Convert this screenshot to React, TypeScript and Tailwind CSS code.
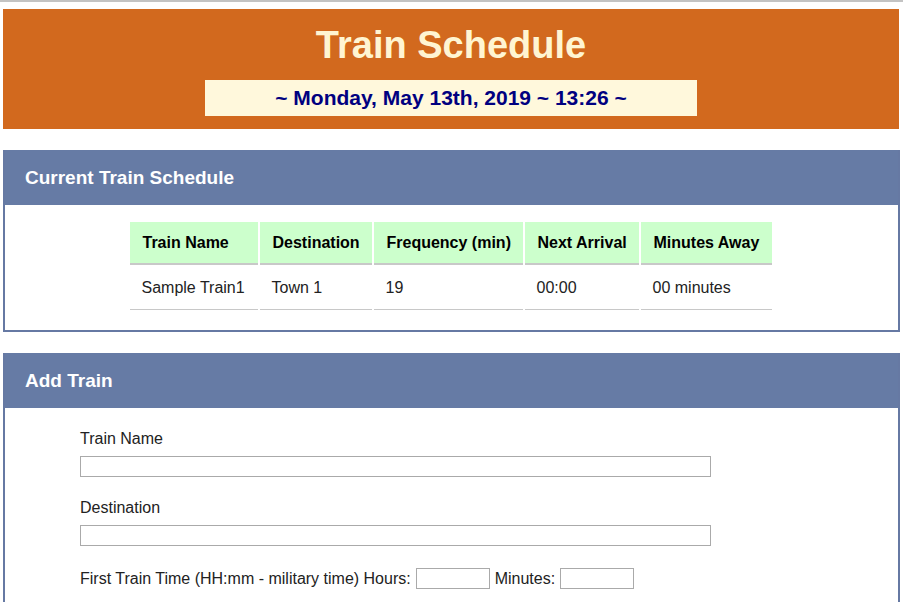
import React from "react";

const trains = [
  { name: "Sample Train1", destination: "Town 1", frequency: "19", next: "00:00", away: "00 minutes" },
];

const columns = [
  { label: "Train Name", w: "w-[128px]" },
  { label: "Destination", w: "w-[112px]" },
  { label: "Frequency (min)", w: "w-[149px]" },
  { label: "Next Arrival", w: "w-[114px]" },
  { label: "Minutes Away", w: "w-[131px]" },
];

function Panel({ title, children }: { title: string; children: React.ReactNode }) {
  return (
    <div className="border-2 border-t-0 border-[#6679a3] bg-white">
      <div className="h-[55px] bg-[#667ba5] pl-[20px] pt-[2px] flex items-center">
        <h3 className="text-[19px] font-bold text-white">{title}</h3>
      </div>
      {children}
    </div>
  );
}

export default function App() {
  return (
    <div className="min-h-screen bg-white border-t-2 border-[#c3c3c3] px-[3px] pt-[7px] font-['Liberation_Sans',Arial,sans-serif] text-[16px] text-black">
      {/* Header */}
      <div className="bg-[#d2691e] h-[120px] flex flex-col items-center mr-px">
        <h1 className="mt-[11px] h-[50px] leading-[50px] text-[38px] font-bold text-[#fff5d2]">Train Schedule</h1>
        <div className="mt-[10px] w-[492px] h-[36px] bg-[#fff8dc] flex items-center justify-center">
          <span className="text-[21px] font-bold text-[#000080]">~ Monday, May 13th, 2019 ~ 13:26 ~</span>
        </div>
      </div>

      <div className="mt-[21px]">
        <Panel title="Current Train Schedule">
          <div className="pt-[17px] pb-[20px] pr-[2px] flex justify-center">
            <table className="border-separate border-spacing-x-[2px] border-spacing-y-0 -mx-[2px]">
              <thead>
                <tr>
                  {columns.map((c) => (
                    <th
                      key={c.label}
                      className={`${c.w} h-[43px] bg-[#ccffcc] border-b-2 border-[#c8c8c8] pl-[13px] text-left font-bold`}
                    >
                      {c.label}
                    </th>
                  ))}
                </tr>
              </thead>
              <tbody>
                {trains.map((t) => (
                  <tr key={t.name}>
                    {[t.name, t.destination, t.frequency, t.next, t.away].map((v, i) => (
                      <td key={i} className="h-[45px] pt-[2px] border-b border-[#c8c8c8] pl-[12px] text-left text-[#222]">
                        {v}
                      </td>
                    ))}
                  </tr>
                ))}
              </tbody>
            </table>
          </div>
        </Panel>
      </div>

      <div className="mt-[21px]">
        <Panel title="Add Train">
          <div className="pl-[75px] pt-[22px] pb-[20px] text-[#222]">
            <div className="h-[18px] leading-[18px]">Train Name</div>
            <input className="mt-[8px] block w-[631px] h-[21px] border border-[#aaa]" />
            <div className="mt-[22px] h-[18px] leading-[18px]">Destination</div>
            <input className="mt-[8px] block w-[631px] h-[21px] border border-[#aaa]" />
            <div className="mt-[22px] flex items-center h-[21px]">
              <span>First Train Time (HH:mm - military time) Hours:</span>
              <input className="ml-[5px] w-[74px] h-[21px] border border-[#aaa]" />
              <span className="ml-[5px]">Minutes:</span>
              <input className="ml-[5px] w-[74px] h-[21px] border border-[#aaa]" />
            </div>
          </div>
        </Panel>
      </div>
    </div>
  );
}
